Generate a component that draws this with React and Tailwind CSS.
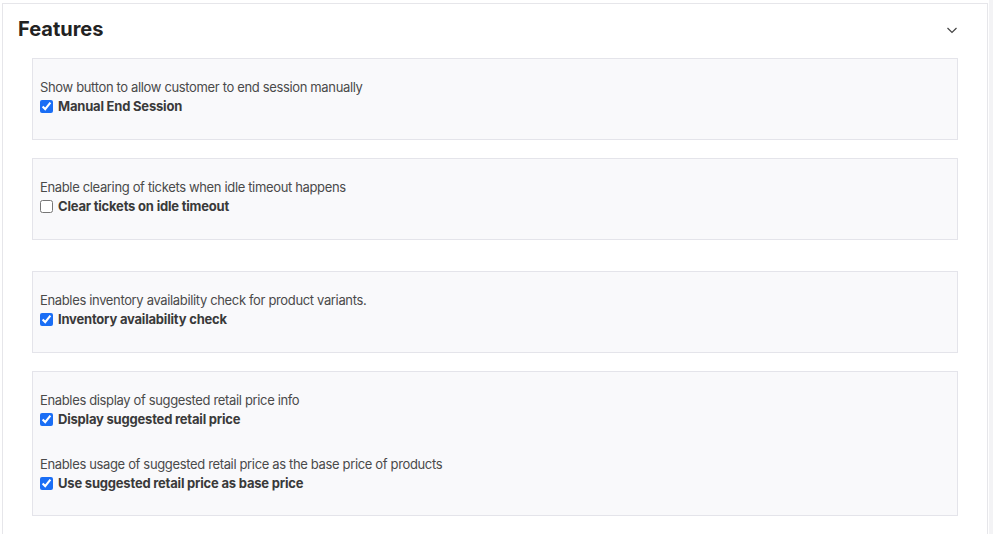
import React, { useState } from "react";

const sections = [
  {
    id: "manual",
    items: [
      {
        key: "manualEnd",
        description: "Show button to allow customer to end session manually",
        label: "Manual End Session",
        checked: true,
      },
    ],
  },
  {
    id: "idle",
    items: [
      {
        key: "clearTickets",
        description: "Enable clearing of tickets when idle timeout happens",
        label: "Clear tickets on idle timeout",
        checked: false,
      },
    ],
  },
  {
    id: "inventory",
    spaced: true,
    items: [
      {
        key: "inventory",
        description: "Enables inventory availability check for product variants.",
        label: "Inventory availability check",
        checked: true,
      },
    ],
  },
  {
    id: "srp",
    items: [
      {
        key: "displaySrp",
        description: "Enables display of suggested retail price info",
        label: "Display suggested retail price",
        checked: true,
      },
      {
        key: "useSrp",
        description: "Enables usage of suggested retail price as the base price of products",
        label: "Use suggested retail price as base price",
        checked: true,
      },
    ],
  },
];

const Option = ({ item, value, onChange, first }) => (
  <div className={first ? "" : "mt-[26px]"}>
    <div className="text-[13px] leading-[19px] tracking-[-0.35px] text-[#4a4a4a]">
      {item.description}
    </div>
    <label className="flex items-center h-[19px] cursor-pointer">
      <input
        type="checkbox"
        checked={value}
        onChange={() => onChange(item.key)}
        className="w-[13px] h-[13px] m-0 mr-[5px] accent-[#1a6ef5]"
      />
      <span className="text-[13px] font-bold tracking-[-0.2px] text-[#3a3a3a]">{item.label}</span>
    </label>
  </div>
);

export default function App() {
  const [values, setValues] = useState(() => {
    const v = {};
    sections.forEach((s) => s.items.forEach((i) => (v[i.key] = i.checked)));
    return v;
  });

  const toggle = (key) => setValues((prev) => ({ ...prev, [key]: !prev[key] }));

  return (
    <div
      className="flex min-h-[534px] bg-white"
      style={{ fontFamily: "Inter, 'Noto Sans', sans-serif" }}
    >
      <div className="w-[986px] ml-[2px] mt-[3px] border-t border-l border-r border-[#e6e6ea] bg-white pt-[11px] pb-[20px]">
        <div className="flex items-center justify-between pl-[15px] pr-[29px] h-[28px]">
          <h2 className="text-[20px] font-bold text-[#222] leading-[28px]">Features</h2>
          <svg width="12" height="12" viewBox="0 0 12 12" fill="none" className="mt-[1px]">
            <path d="M1.5 4l4.5 4.5L10.5 4" stroke="#444" strokeWidth="1.2" />
          </svg>
        </div>

        <div className="ml-[29px] mr-[29px] mt-[15px]">
          {sections.map((s, idx) => (
            <div
              key={s.id}
              className={`border border-[#e4e4ea] bg-[#f9f9fb] px-[7px] pt-[19px] ${
                s.items.length > 1 ? "pb-[22px]" : "pb-[23px]"
              } ${idx === 0 ? "" : s.spaced ? "mt-[31px]" : "mt-[18px]"}`}
            >
              {s.items.map((item, i) => (
                <Option
                  key={item.key}
                  item={item}
                  value={values[item.key]}
                  onChange={toggle}
                  first={i === 0}
                />
              ))}
            </div>
          ))}
        </div>
      </div>
      <div className="flex-1 bg-[#f3f3f5] ml-[1px]" />
    </div>
  );
}
